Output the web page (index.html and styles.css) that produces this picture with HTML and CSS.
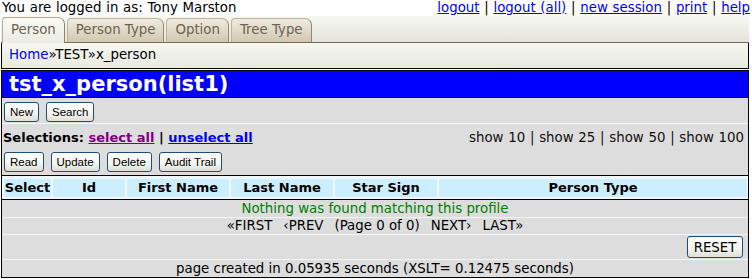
FILE: index.html
```html
<!DOCTYPE html>
<html lang="en">
<head>
<meta charset="UTF-8">
<title>tst_x_person(list1)</title>
<link rel="stylesheet" href="styles.css">
</head>
<body>
<div class="topline">
    <span>You are logged in as: Tony Marston</span>
    <span class="links"><a href="#">logout</a> | <a href="#">logout (all)</a> | <a href="#">new session</a> | <a href="#">print</a> | <a href="#">help</a></span>
</div>

<div class="page">
    <div class="tabbar">
        <a class="tab active" href="#">Person</a>
        <a class="tab" href="#">Person Type</a>
        <a class="tab" href="#">Option</a>
        <a class="tab" href="#">Tree Type</a>
    </div>
    <div class="crumbs"><a href="#">Home</a>»TEST»x_person</div>

    <div class="main">
        <h1 class="title">tst_x_person(list1)</h1>

        <div class="actionbar first">
            <button class="btn">New</button>
            <button class="btn">Search</button>
        </div>

        <div class="selbar">
            <div class="selections">Selections: <a class="seen" href="#">select all</a> | <a href="#">unselect all</a></div>
            <div class="pagesize">show 10 | show 25 | show 50 | show 100</div>
        </div>

        <div class="actionbar">
            <button class="btn">Read</button>
            <button class="btn">Update</button>
            <button class="btn">Delete</button>
            <button class="btn">Audit Trail</button>
        </div>

        <div class="gridhead">
            <div class="col">Select</div>
            <div class="col">Id</div>
            <div class="col">First Name</div>
            <div class="col">Last Name</div>
            <div class="col">Star Sign</div>
            <div class="col">Person Type</div>
        </div>

        <div class="row msg">Nothing was found matching this profile</div>
        <div class="row pager">
            <span>«FIRST</span>
            <span>‹PREV</span>
            <span>(Page 0 of 0)</span>
            <span>NEXT›</span>
            <span>LAST»</span>
        </div>
        <div class="row resetrow"><button class="reset">RESET</button></div>
        <div class="row timing">page created in 0.05935 seconds (XSLT= 0.12475 seconds)</div>
    </div>
</div>
</body>
</html>
```

FILE: styles.css
```css
* {
    box-sizing: border-box;
}
body {
    margin: 0;
    background-color: #ffffff;
    font-family: "DejaVu Sans", Verdana, sans-serif;
    font-size: 13.33px;
    color: #000;
}
a {
    color: #0000ff;
}

/* top line */
.topline {
    display: flex;
    justify-content: space-between;
    padding: 0 2px;
    height: 16px;
    line-height: 15px;
    word-spacing: 0.5px;
}

.page {
    width: 748px;
    margin-left: 1px;
}

/* tabs */
.tabbar {
    display: flex;
    align-items: flex-end;
    gap: 2px;
    height: 27px;
    padding-left: 1px;
    background: linear-gradient(#f7f7f3, #eef0e8 40%, #e4e3d9);
    border-bottom: 1px solid #7a6a52;
}
.tab {
    height: 24px;
    line-height: 22px;
    padding: 0 8px;
    color: #6e6350;
    text-decoration: none;
    background: linear-gradient(#efebe0, #ddd6c3 60%, #cfc7af);
    border: 1px solid #bdb296;
    border-right-color: #978a6c;
    border-bottom: none;
    border-radius: 4px 7px 0 0;
}
.tab.active {
    height: 26px;
    line-height: 24px;
    margin-bottom: -1px;
    background: linear-gradient(#fafaf6, #f1f1ea 60%, #ebebe3);
    border-color: #b7ad96;
    border-right-color: #8f836a;
}

/* breadcrumbs */
.crumbs {
    height: 26px;
    padding: 4px 7px 0;
    line-height: 16px;
    background: linear-gradient(#f6f7f1, #eef0e8 50%, #e9ebe1);
    border: 1px solid #000;
    border-top: none;
}
.crumbs a {
    text-decoration: none;
}

/* main area */
.main {
    margin-top: 1px;
    border: 1px solid #000;
    background-color: #dddddd;
}
.title {
    margin: 0;
    height: 27px;
    padding-left: 7px;
    line-height: 26px;
    font-size: 21px;
    font-weight: bold;
    color: #ffffff;
    background-color: #0000ff;
    border-bottom: 1px solid #000;
}

.actionbar {
    display: flex;
    gap: 7px;
    padding: 4px 2px 3px;
    height: 27px;
}
.actionbar.first {
    height: 26px;
    padding-bottom: 1px;
    border-bottom: 1px solid #f6f6f6;
}
.btn {
    height: 20px;
    padding: 0 5px;
    font-family: "Liberation Sans", Arial, sans-serif;
    font-size: 11.5px;
    color: #000;
    background: linear-gradient(#ffffff, #f4f4ef 60%, #deded6);
    border: 1px solid #1d4f7c;
    border-radius: 3px;
}

.selbar {
    display: flex;
    justify-content: space-between;
    height: 24px;
    padding: 6px 4px 0 1px;
    line-height: 16px;
}
.selections {
    font-weight: bold;
    font-size: 13px;
}
.selections a.seen {
    color: #800080;
}
.pagesize {
    word-spacing: 0.5px;
    color: #111;
}

/* list header */
.gridhead {
    display: grid;
    grid-template-columns: 47px 72px 102px 102px 102px 1fr;
    column-gap: 2px;
    padding: 3px 1px 2px 2px;
    background-color: #eef7fb;
    border-top: 1px solid #000;
    border-bottom: 1px solid #000;
}
.col {
    height: 18px;
    line-height: 18px;
    text-align: center;
    font-weight: bold;
    font-size: 13px;
    background-color: #cceeff;
}

/* list body */
.row {
    text-align: center;
    border-bottom: 1px solid #f4f4f4;
}
.row:last-child {
    border-bottom: none;
}
.msg {
    height: 18px;
    line-height: 17px;
    color: #008000;
}
.pager {
    display: flex;
    justify-content: center;
    gap: 11px;
    height: 17px;
    line-height: 16px;
}
.resetrow {
    display: flex;
    justify-content: flex-end;
    height: 25px;
    padding: 1px 5px 0 0;
}
.reset {
    width: 56px;
    height: 22px;
    padding: 0;
    font-family: "DejaVu Sans", Verdana, sans-serif;
    font-size: 13.33px;
    color: #000;
    background: linear-gradient(#ffffff, #f4f4ef 60%, #deded6);
    border: 1px solid #1d4f7c;
    border-radius: 3px;
}
.timing {
    height: 17px;
    line-height: 17px;
}
```
